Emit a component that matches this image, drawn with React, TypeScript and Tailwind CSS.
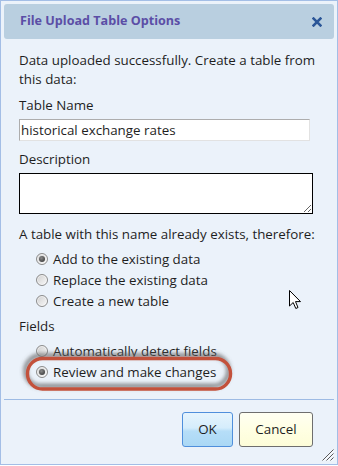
import React from "react";

function Radio({ checked }: { checked?: boolean }) {
  return (
    <span className="mb-[2px] flex h-[12px] w-[12px] shrink-0 items-center justify-center rounded-full border border-[#8c8c8c] bg-[linear-gradient(135deg,#cfcfcf,#f9f9f9)] shadow-[inset_0_0_0_1px_rgba(255,255,255,0.6)]">
      {checked && (
        <span className="h-[6px] w-[6px] rounded-full bg-[radial-gradient(circle_at_40%_35%,#8a8a8a,#2b2b2b)]" />
      )}
    </span>
  );
}

function RadioRow({ label, checked }: { label: string; checked?: boolean }) {
  return (
    <div className="flex h-[21px] items-center pl-[17px] leading-[21px]">
      <Radio checked={checked} />
      <span className="ml-[5px]">{label}</span>
    </div>
  );
}

export default function App() {
  return (
    <div className="relative h-[466px] w-[338px] bg-white font-['Open_Sans',sans-serif] text-[13.35px] text-[#1e1e1e]">
      <div className="relative flex h-[465px] w-[338px] flex-col overflow-hidden border border-[#a3bee6] bg-[#ebf2fa]">
        {/* Title bar */}
        <div className="mx-[3px] mt-[3px] flex h-[35px] shrink-0 items-center justify-between rounded-[3px] bg-[#b9cfe0] pl-[16px] pr-[12px]">
          <span className="whitespace-nowrap text-[12.6px] font-bold text-[#5b4ea6]">File Upload Table Options</span>
          <svg width="10" height="10" viewBox="0 0 10 10" className="mt-[1px]">
            <path d="M1.6 1.6 L8.4 8.4 M8.4 1.6 L1.6 8.4" stroke="#2a5597" strokeWidth="2.6" strokeLinecap="square" />
          </svg>
        </div>

        {/* Body */}
        <div className="flex shrink-0 flex-col whitespace-nowrap pl-[18px] pr-[24px] leading-[19px]">
          <p className="mt-[12px]">
            Data uploaded successfully. Create a table from
            <br />
            this data:
          </p>
          <div className="mt-[7px]">Table Name</div>
          <input
            readOnly
            defaultValue="historical exchange rates"
            className="mt-[4px] block h-[22px] w-[291px] border border-[#adadad] border-b-[#e2e2e2] border-r-[#e2e2e2] bg-white px-[1px] text-[13.35px] leading-[20px] text-[#1e1e1e] outline-none"
          />
          <div className="mt-[9px]">Description</div>
          <textarea className="mt-[4px] block h-[41px] w-[294px] border border-black bg-white outline-none" />
          <div className="mt-[11px]">A table with this name already exists, therefore:</div>
          <div className="mt-[5px] flex flex-col">
            <RadioRow label="Add to the existing data" checked />
            <RadioRow label="Replace the existing data" />
            <RadioRow label="Create a new table" />
          </div>
          <div className="mt-[5px]">Fields</div>
          <div className="mt-[5px] flex flex-col">
            <RadioRow label="Automatically detect fields" />
            <RadioRow label="Review and make changes" checked />
          </div>
        </div>

        {/* Separator */}
        <div className="mx-[3px] mt-[16px] h-px shrink-0 bg-[#9dbbe4]" />

        {/* Buttons */}
        <div className="mt-[12px] flex shrink-0 justify-end gap-[6px] pr-[24px]">
          <button className="flex h-[35px] w-[51px] items-center justify-center rounded-[3px] border border-[#4f8fdc] bg-[linear-gradient(#e6f4fd,#d5edfc_45%,#b6def8_55%,#aad8f5)] text-[13.35px] text-[#1e1e1e]">
            OK
          </button>
          <button className="flex h-[35px] w-[74px] items-center justify-center rounded-[3px] border border-[#6e6e6e] bg-[linear-gradient(#fffff2,#ffffe3_50%,#fdfdd8)] text-[13.35px] text-[#1e1e1e]">
            Cancel
          </button>
        </div>

        {/* Resize grip */}
        <svg width="12" height="12" viewBox="0 0 12 12" className="absolute bottom-[3px] right-[3px]">
          <path d="M11.5 0.5 L0.5 11.5 M11.5 4.5 L4.5 11.5 M11.5 8.5 L8.5 11.5" stroke="#5a5a5a" strokeWidth="1" />
          <path d="M12 1.5 L1.5 12 M12 5.5 L5.5 12 M12 9.5 L9.5 12" stroke="#ffffff" strokeWidth="1" />
        </svg>
      </div>

      {/* Red annotation */}
      <svg width="338" height="466" className="pointer-events-none absolute left-0 top-0">
        <defs>
          <filter id="sh" x="-20%" y="-60%" width="140%" height="220%">
            <feDropShadow dx="-2" dy="-3" stdDeviation="2.2" floodColor="#5f5f5f" floodOpacity="0.95" />
          </filter>
        </defs>
        <rect x="27.5" y="358.5" width="203" height="30.5" rx="15" ry="15" fill="none" stroke="#c3513b" strokeWidth="3.4" filter="url(#sh)" />
      </svg>

      {/* Mouse cursor */}
      <svg width="13" height="20" viewBox="0 0 13 20" className="pointer-events-none absolute left-[289px] top-[290px]">
        <path d="M0.5 0.5 L0.5 16 L4.2 12.5 L6.8 18.5 L9 17.5 L6.5 11.6 L11.5 11.6 Z" fill="#ffffff" stroke="#000000" strokeWidth="1" strokeLinejoin="miter" />
      </svg>
    </div>
  );
}
